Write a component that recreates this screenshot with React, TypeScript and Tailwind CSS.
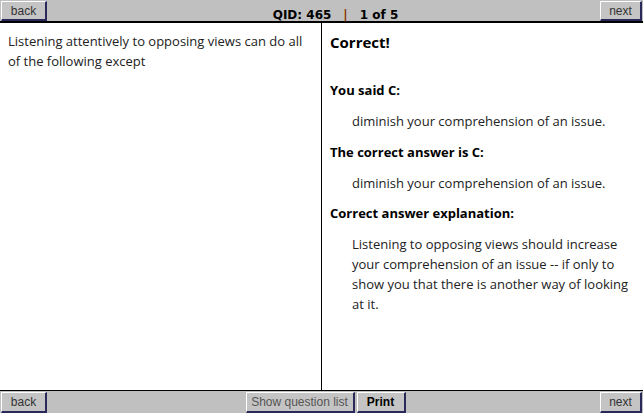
import React from "react";

const btn =
  "bg-[#c4c4c4] border-t border-l border-t-white border-l-white border-b-2 border-r-2 border-b-[#2a2a5a] border-r-[#2a2a5a] text-[12px] leading-none text-[#333] flex items-center justify-center";

export default function App() {
  const sans = { fontFamily: '"Liberation Sans", Arial, sans-serif' };
  const body = { fontFamily: '"Open Sans", "Noto Sans", sans-serif' };
  return (
    <div className="w-[643px] h-[413px] flex flex-col bg-white overflow-hidden">
      <div className="h-[23px] shrink-0 bg-[#c0c0c0] border-b-2 border-black flex items-start justify-between px-[1px] pt-[1px]" style={sans}>
        <button className={`${btn} w-[46px] h-[20px]`}>back</button>
        <div className="flex-1 flex justify-center pt-[5px] pl-[24px] font-bold text-black" style={{ fontFamily: '"DejaVu Sans", Verdana, sans-serif', fontSize: "12px" }}>
          <span>QID: 465</span>
          <span className="mx-[12px] text-[#8a3000]">|</span>
          <span>1 of 5</span>
        </div>
        <button className={`${btn} w-[42px] h-[20px]`}>next</button>
      </div>
      <div className="flex-1 flex min-h-0" style={body}>
        <div className="w-[322px] shrink-0 border-r border-black pl-[8px] pr-[6px] pt-[8px] text-[13px] leading-[20px] text-[#222]">
          Listening attentively to opposing views can do all of the following except
        </div>
        <div className="flex-1 pl-[8px] pr-[4px] pt-[9px] text-[13px] leading-[20px] text-[#222]">
          <div className="font-bold text-[15px] text-black">Correct!</div>
          <div className="font-bold text-black mt-[28px]">You said C:</div>
          <div className="pl-[22px] mt-[11px]">diminish your comprehension of an issue.</div>
          <div className="font-bold text-black mt-[11px]">The correct answer is C:</div>
          <div className="pl-[22px] mt-[11px]">diminish your comprehension of an issue.</div>
          <div className="font-bold text-black mt-[10px]">Correct answer explanation:</div>
          <div className="pl-[22px] mt-[11px]">
            Listening to opposing views should increase your comprehension of an issue -- if only to show you that there is another way of looking at it.
          </div>
        </div>
      </div>
      <div className="h-[23px] shrink-0 bg-[#c0c0c0] border-t border-black flex items-start pt-[1px] px-[1px]" style={sans}>
        <button className={`${btn} w-[46px] h-[21px]`}>back</button>
        <div className="flex-1 flex justify-center gap-[2px] pl-[4px]">
          <button className={`${btn} w-[109px] h-[21px] text-[#555]`}>Show question list</button>
          <button className={`${btn} w-[49px] h-[21px] font-bold text-black`}>Print</button>
        </div>
        <button className={`${btn} w-[42px] h-[21px]`}>next</button>
      </div>
    </div>
  );
}
